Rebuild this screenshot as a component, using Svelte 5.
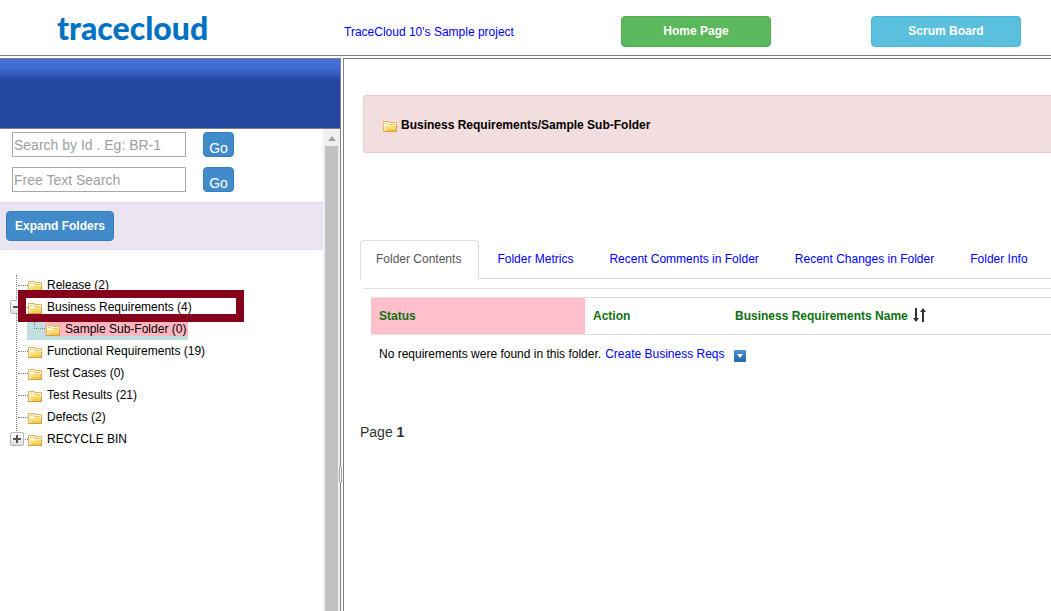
<script>
  const tabs = [
    'Folder Contents',
    'Folder Metrics',
    'Recent Comments in Folder',
    'Recent Changes in Folder',
    'Folder Info'
  ];
  let active = $state(0);

  const folders = [
    { name: 'Release (2)' },
    { name: 'Business Requirements (4)', toggle: '−', marked: true, children: ['Sample Sub-Folder (0)'] },
    { name: 'Functional Requirements (19)' },
    { name: 'Test Cases (0)' },
    { name: 'Test Results (21)' },
    { name: 'Defects (2)' },
    { name: 'RECYCLE BIN', toggle: '+' }
  ];
</script>

{#snippet folderIcon()}
  <svg class="folder" width="14" height="11" viewBox="0 0 14 11" aria-hidden="true">
    <path d="M0 0h7v1h7v10H0z" fill="#e3b95c" />
    <path d="M1 1h5v1h7v8H1z" fill="#fff8dc" />
    <path d="M2 2h3v1H2zM6 3h6v1H6z" fill="#ecc97a" />
    <path d="M1 5h5l1-1h6v6H1z" fill="#fbeaa6" />
    <path d="M3 6h4l1-1h5v5H2z" fill="#f7dc74" />
    <path d="M5 8h8v2H4z" fill="#f2cb45" />
    <path d="M0 10h14v1H0zM13 5h1v6h-1z" fill="#d99a4a" />
  </svg>
{/snippet}

<div class="app">
  <header class="top">
    <div class="logo">tracecloud</div>
    <a class="project" href="#project">TraceCloud 10's Sample project</a>
    <button class="btn home">Home Page</button>
    <button class="btn scrum">Scrum Board</button>
  </header>

  <div class="panes">
    <aside class="side">
      <div class="banner"></div>
      <div class="scroller">
        <div class="side-body">
          <form class="search" onsubmit={(e) => e.preventDefault()}>
            <input type="text" aria-label="Search by Id" placeholder="Search by Id . Eg: BR-1" />
            <button class="go">Go</button>
          </form>
          <form class="search" onsubmit={(e) => e.preventDefault()}>
            <input type="text" aria-label="Free Text Search" placeholder="Free Text Search" />
            <button class="go">Go</button>
          </form>
          <div class="expand-bar"><button class="btn expand">Expand Folders</button></div>
          <ul class="tree">
            {#each folders as f}
              <li class:marked={f.marked}>
                <div class="row">
                  <span class="dots"></span>
                  {@render folderIcon()}
                  <span class="name">{f.name}</span>
                  {#if f.toggle}
                    <button class="toggle" aria-label="Toggle folder">
                      <svg width="8" height="8" viewBox="0 0 8 8" aria-hidden="true">
                        <path d={f.toggle === '+' ? 'M0 3h3V0h2v3h3v2H5v3H3V5H0z' : 'M0 3h8v2H0z'} fill="#555" />
                      </svg>
                    </button>
                  {/if}
                </div>
                {#if f.children}
                  <ul class="sub">
                    {#each f.children as c}
                      <li class="row">
                        <span class="dots"></span>
                        <span class="picked">{@render folderIcon()}<span class="name">{c}</span></span>
                      </li>
                    {/each}
                  </ul>
                {/if}
              </li>
            {/each}
          </ul>
        </div>
        <div class="bar">
          <svg width="8" height="5" viewBox="0 0 8 5" aria-hidden="true"><path d="M0 5L4 0l4 5z" fill="#a3a3a3" /></svg>
          <div class="thumb"></div>
        </div>
      </div>
    </aside>
    <div class="split"><span class="grip"></span></div>
    <main>
      <div class="crumb">{@render folderIcon()}<b>Business Requirements/Sample Sub-Folder</b></div>
      <nav class="tabs">
        {#each tabs as t, i}
          <a href="#tab{i}" class:active={active === i} onclick={() => (active = i)}>{t}</a>
        {/each}
      </nav>
      <section class="content">
        <table>
          <thead>
            <tr>
              <th class="status">Status</th>
              <th class="action">Action</th>
              <th>
                Business Requirements Name
                <svg width="13" height="14" viewBox="0 0 13 14" aria-hidden="true">
                  <path d="M2 0h2v10h2L3 14 0 10h2zM9 14V4H7l3-4 3 4h-2v10z" fill="#333" />
                </svg>
              </th>
            </tr>
          </thead>
          <tbody>
            <tr>
              <td colspan="3">
                No requirements were found in this folder.<a class="create" href="#create">Create Business Reqs</a>
                <svg class="drop" width="12" height="12" viewBox="0 0 12 12" aria-hidden="true">
                  <defs>
                    <linearGradient id="blue" x1="0" y1="0" x2="0" y2="1">
                      <stop offset="0" stop-color="#4b93d0" /><stop offset="1" stop-color="#2566ad" />
                    </linearGradient>
                  </defs>
                  <rect width="12" height="12" rx="1" fill="url(#blue)" />
                  <path d="M3 4h6L6 8z" fill="#fff" />
                </svg>
              </td>
            </tr>
          </tbody>
        </table>
      </section>
      <p class="page">Page <b>1</b></p>
    </main>
  </div>
</div>

<style>
  :global(body) {
    margin: 0;
    background: #fff;
  }
  .app {
    display: flex;
    flex-direction: column;
    height: 100vh;
    overflow: hidden;
    box-sizing: border-box;
    font: 12px/18px "Liberation Sans", Arial, sans-serif;
    color: #000;
  }
  .app :global(*),
  .app :global(*::after) {
    box-sizing: border-box;
  }
  a {
    color: #00f;
    text-decoration: none;
  }
  button,
  input {
    font-family: inherit;
  }
  ul {
    list-style: none;
    margin: 0;
    padding: 0;
  }
  svg {
    flex: none;
  }
  .top {
    display: grid;
    grid-template-columns: 344px 277px 250px 150px;
    height: 56px;
    flex: none;
    padding-top: 16px;
    border-bottom: 1px solid #808080;
  }
  .logo {
    padding-left: 57px;
    font: 900 32px/24px Lato, sans-serif;
    color: #0072c4;
  }
  .project {
    line-height: 32px;
  }
  .btn {
    border: 1px solid;
    border-radius: 4px;
    padding: 0 0 1px;
    width: 150px;
    height: 31px;
    font-size: 12px;
    font-weight: bold;
    color: #fff;
  }
  .home {
    background: #5cb85c;
    border-color: #4cae4c;
  }
  .scrum {
    background: #5bc0de;
    border-color: #46b8da;
  }
  .panes {
    display: flex;
    flex: 1;
    min-height: 0;
    padding-top: 2px;
  }
  .side {
    display: flex;
    flex-direction: column;
    flex: none;
    width: 341px;
    border: solid #808080;
    border-width: 1px 1px 0 0;
  }
  .banner {
    flex: none;
    height: 70px;
    background: linear-gradient(#4371da 0, #3f68d0 10px, #24479f 22px);
    border-bottom: 1px solid #808080;
  }
  .scroller {
    display: flex;
    flex: 1;
    min-height: 0;
  }
  .side-body {
    flex: 1;
    padding-top: 3px;
  }
  .search {
    display: flex;
    gap: 17px;
    height: 25px;
    margin: 0 0 10px 12px;
  }
  .search input {
    width: 174px;
    padding: 1px;
    border: 1px solid #a9a9a9;
    font-size: 14px;
    color: #333;
  }
  .search input::placeholder {
    color: #a0a0a0;
  }
  .go {
    width: 31px;
    padding: 6px 0 0;
    overflow: hidden;
    border: 1px solid #357ebd;
    border-radius: 4px;
    background: #428bca;
    color: #fff;
    font-size: 14px;
    line-height: 18px;
  }
  .expand-bar {
    height: 48px;
    padding: 8px 6px;
    border: dotted #ddd8e8;
    border-width: 1px 0;
    background: #eae4f2;
  }
  .expand {
    width: 108px;
    height: 30px;
    background: #428bca;
    border-color: #357ebd;
  }
  .tree {
    position: relative;
    margin: 24px 0 0 16px;
  }
  .tree::before {
    content: "";
    position: absolute;
    top: 1px;
    bottom: 11px;
    border-left: 1px dotted #808080;
  }
  .row {
    position: relative;
    display: flex;
    align-items: center;
    height: 22px;
  }
  .dots {
    width: 10px;
    margin-left: 2px;
    border-top: 1px dotted #808080;
  }
  .row .folder {
    margin-top: 2px;
  }
  .name {
    margin-left: 5px;
  }
  .toggle {
    position: absolute;
    left: -6px;
    display: flex;
    align-items: center;
    justify-content: center;
    width: 14px;
    height: 14px;
    padding: 0;
    border: 1px solid #b5b5b5;
    border-radius: 2px;
    background: linear-gradient(#fff, #dedede);
  }
  .marked {
    position: relative;
  }
  .marked::after {
    content: "";
    position: absolute;
    top: -6px;
    left: 2px;
    width: 226px;
    height: 32px;
    border: 8px solid #85001a;
    pointer-events: none;
  }
  .sub {
    width: max-content;
    margin-left: 11px;
    background: #c0dfdd;
  }
  .sub .dots {
    width: 11px;
    height: 11px;
    margin: 0 0 11px 7px;
    border: dotted #808080;
    border-width: 0 0 1px 1px;
  }
  .picked {
    display: flex;
    align-items: center;
    height: 18px;
    margin-bottom: 4px;
    padding: 4px 2px 0 1px;
    background: #ffb6c1;
  }
  .bar {
    display: flex;
    flex-direction: column;
    align-items: center;
    gap: 5px;
    width: 17px;
    padding-top: 7px;
    background: #f0f0f0;
  }
  .thumb {
    flex: 1;
    width: 13px;
    background: #c1c1c1;
  }
  .split {
    position: relative;
    flex: none;
    width: 2px;
  }
  .grip {
    position: absolute;
    top: 409px;
    left: -2px;
    width: 3px;
    height: 15px;
    border: solid #a0a0a0;
    border-width: 0 1px;
    background: #fff;
  }
  main {
    flex: 1;
    min-width: 0;
    overflow: hidden;
    padding: 36px 0 0 16px;
    border: solid #808080;
    border-width: 1px 0 0 1px;
  }
  .crumb {
    display: flex;
    align-items: center;
    gap: 4px;
    height: 58px;
    margin-left: 3px;
    padding: 2px 0 0 19px;
    border: 1px solid #ebccd1;
    border-right: 0;
    border-radius: 4px 0 0 4px;
    background: #f2dede;
  }
  .crumb .folder {
    margin-top: 2px;
  }
  .tabs {
    display: flex;
    gap: 2px;
    height: 39px;
    margin-top: 87px;
    border-bottom: 1px solid #ddd;
    white-space: nowrap;
  }
  .tabs a {
    height: 39px;
    padding: 9px 17px 9px 15px;
    border: 1px solid transparent;
    border-bottom: 0;
    border-radius: 4px 4px 0 0;
  }
  .tabs .active {
    border-color: #ddd;
    background: #fff;
    color: #555;
  }
  .content {
    margin: 9px 0 0 3px;
    padding: 8px 0 0 8px;
    border-top: 1px solid #ddd;
  }
  table {
    width: 100%;
    border-collapse: collapse;
  }
  th {
    height: 37px;
    padding: 0 8px;
    border: solid #ddd;
    border-width: 1px 0;
    text-align: left;
    color: #107010;
  }
  th svg {
    margin-left: 2px;
    vertical-align: -2px;
  }
  .status {
    width: 214px;
    background: #ffc0cb;
  }
  .action {
    width: 142px;
  }
  td {
    height: 38px;
    padding: 0 8px;
  }
  .create {
    margin: 0 4px;
  }
  .drop {
    margin-left: 2px;
    vertical-align: -4px;
  }
  .page {
    margin: 49px 0 0;
    font-size: 14px;
    line-height: 20px;
    color: #333;
  }
</style>
